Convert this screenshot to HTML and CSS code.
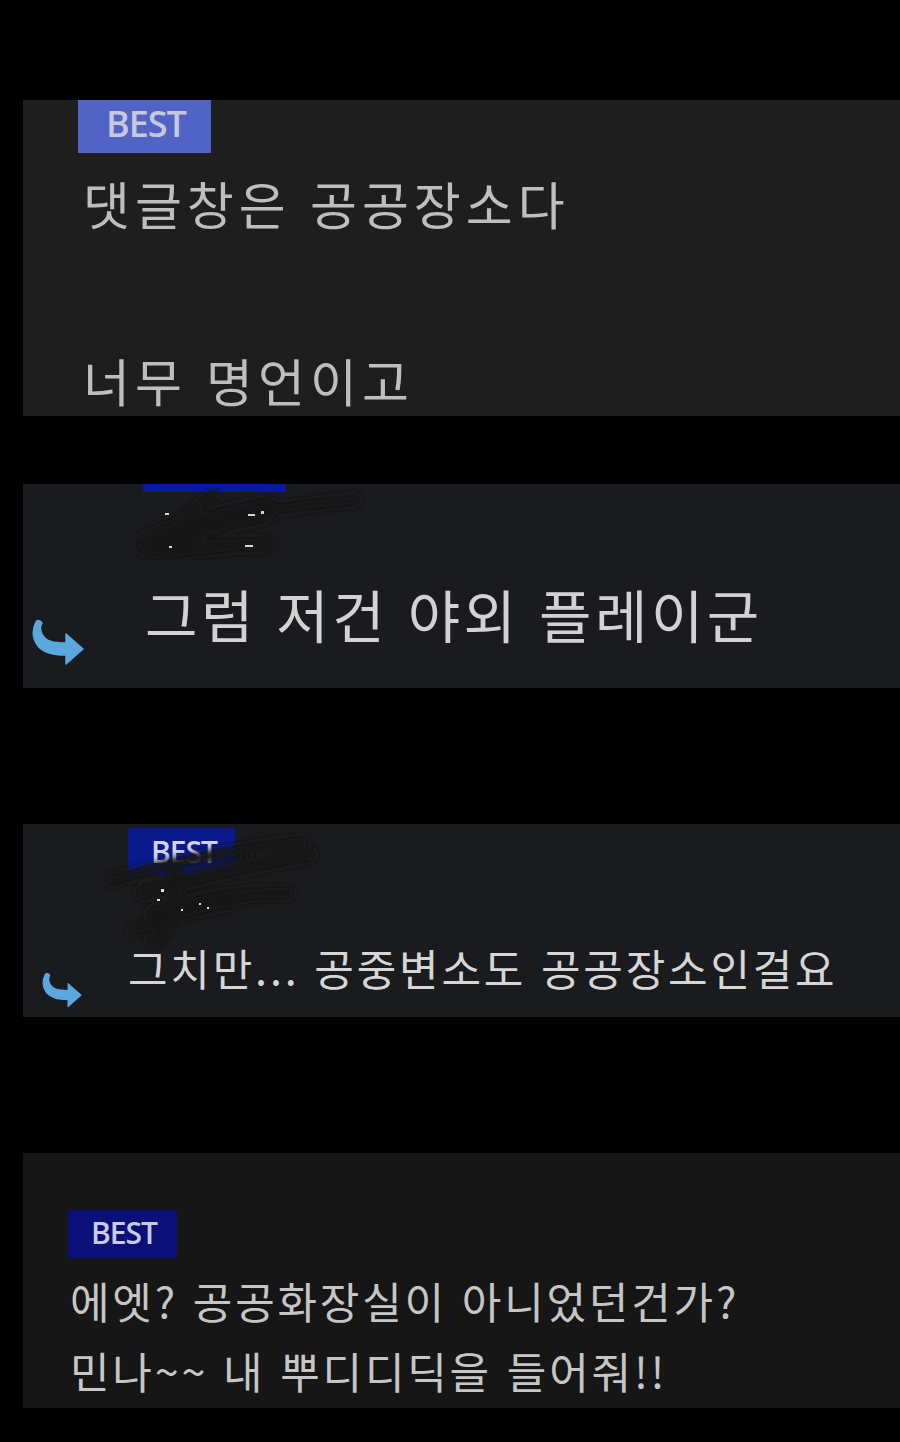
FILE: index.html
```html
<!DOCTYPE html>
<html lang="ko">
<head>
  <meta charset="UTF-8" />
  <meta name="viewport" content="width=device-width, initial-scale=1.0" />
  <title>베스트 댓글</title>
  <link rel="stylesheet" href="styles.css">
</head>
<body>
  <div class="card card-one">
    <span class="best best-one">BEST</span>
    <p class="text-one first">댓글창은 공공장소다</p>
    <p class="text-one second">너무 명언이고</p>
  </div>

  <div class="card card-two">
    <div class="best-sliver"></div>
    <div class="author author-two">
      <svg class="scribble" width="240" height="80" viewBox="0 0 240 80">
        <defs>
          <filter id="blur2"><feGaussianBlur stdDeviation="3" /></filter>
        </defs>
        <g filter="url(#blur2)" stroke="#141416" stroke-linecap="round" fill="none">
          <path d="M14 56 C50 40 90 30 130 22" stroke-width="26" />
          <path d="M20 66 C60 60 100 56 130 56" stroke-width="16" />
          <path d="M90 30 C140 20 180 16 220 12" stroke-width="12" />
          <path d="M50 30 C60 20 70 12 78 6" stroke-width="10" />
        </g>
        <g fill="#d8d8d8">
          <rect x="30" y="25" width="4" height="2" />
          <rect x="113" y="26" width="7" height="2" />
          <rect x="126" y="23" width="3" height="3" />
          <rect x="110" y="57" width="8" height="2" />
          <rect x="34" y="58" width="3" height="2" />
        </g>
      </svg>
    </div>
    <div class="reply-row">
      <svg class="reply-arrow arrow-big" viewBox="0 0 52 46">
        <path d="M4 2 C0 10 0 18 6 26 C10 31 18 35 34 35 L34 44 L51 29 L34 14 L34 23 C22 23 14 22 10 14 C8 10 8 6 10 3 C8 0 5 0 4 2 Z" />
      </svg>
      <p class="text-two">그럼 저건 야외 플레이군</p>
    </div>
  </div>

  <div class="card card-three">
    <span class="best best-three">BEST</span>
    <div class="author author-three">
      <svg class="scribble" width="230" height="125" viewBox="0 0 230 125">
        <defs>
          <filter id="blur3"><feGaussianBlur stdDeviation="3" /></filter>
        </defs>
        <g filter="url(#blur3)" stroke="#141417" stroke-linecap="round" fill="none">
          <path d="M8 52 C60 36 120 22 200 12" stroke-width="12" />
          <path d="M40 64 C90 48 150 34 205 26" stroke-width="16" />
          <path d="M50 84 C100 70 150 62 185 64" stroke-width="14" />
          <path d="M70 40 C80 64 70 92 50 112" stroke-width="14" />
          <path d="M30 102 C60 90 100 78 130 74" stroke-width="12" />
        </g>
        <g fill="#e0e0e0">
          <rect x="58" y="60" width="3" height="3" />
          <rect x="54" y="70" width="3" height="2" />
          <rect x="78" y="80" width="2" height="2" />
          <rect x="96" y="74" width="2" height="2" />
          <rect x="104" y="78" width="2" height="2" />
        </g>
      </svg>
    </div>
    <div class="reply-row">
      <svg class="reply-arrow arrow-small" viewBox="0 0 52 46">
        <path d="M4 2 C0 10 0 18 6 26 C10 31 18 35 34 35 L34 44 L51 29 L34 14 L34 23 C22 23 14 22 10 14 C8 10 8 6 10 3 C8 0 5 0 4 2 Z" />
      </svg>
      <p class="text-three">그치만... 공중변소도 공공장소인걸요</p>
    </div>
  </div>

  <div class="card card-four">
    <span class="best best-four">BEST</span>
    <p class="text-four">에엣? 공공화장실이 아니었던건가?</p>
    <p class="text-four">민나~~ 내 뿌디디딕을 들어줘!!</p>
  </div>
</body>
</html>
```

FILE: styles.css
```css
body {
  margin: 0;
  padding: 100px 0 34px;
  background: #000;
  font-family: "Noto Sans CJK KR", "Noto Sans", sans-serif;
}
p {
  margin: 0;
}
.card {
  display: flow-root;
  margin-left: 23px;
  width: 877px;
}
.card-one {
  height: 316px;
  background: #1e1e1e;
  margin-bottom: 68px;
}
.card-two {
  height: 204px;
  background: #1a1b1f;
  margin-bottom: 136px;
}
.card-three {
  height: 193px;
  background: #1a1b1e;
  margin-bottom: 136px;
}
.card-four {
  height: 255px;
  background: #161616;
}
.best {
  display: block;
  box-sizing: border-box;
  font-family: "Open Sans", "Noto Sans", sans-serif;
  font-weight: 600;
  letter-spacing: -1px;
}
.best-one {
  margin-left: 55px;
  width: 133px;
  height: 53px;
  padding-left: 28px;
  font-size: 36px;
  line-height: 47px;
  background: #5263c6;
  color: #c6c9da;
}
.best-three {
  margin: 4px 0 0 105px;
  width: 107px;
  height: 47px;
  padding-left: 23px;
  font-size: 30px;
  line-height: 48px;
  background: #0b1a8c;
  color: #d2d6e8;
  border-radius: 2px;
}
.best-four {
  margin: 57px 0 0 45px;
  width: 109px;
  height: 48px;
  padding-left: 23px;
  font-size: 30px;
  line-height: 46px;
  background: #0a1078;
  color: #c8cce0;
  border-radius: 2px;
}
.text-one {
  margin-left: 60px;
  font-size: 51px;
  line-height: 70px;
  letter-spacing: 5px;
  color: #bebebe;
}
.text-one.first {
  margin-top: 15px;
}
.text-one.second {
  margin-top: 107px;
}
.best-sliver {
  margin-left: 120px;
  width: 143px;
  height: 8px;
  background: #0a1aa0;
}
.author {
  position: relative;
}
.author-two {
  height: 86px;
}
.author-three {
  height: 64px;
}
.scribble {
  position: absolute;
}
.author-two .scribble {
  left: 112px;
  top: -4px;
}
.author-three .scribble {
  left: 80px;
  top: -46px;
}
.reply-row {
  display: flex;
  align-items: flex-start;
}
.reply-arrow {
  fill: #5aa8de;
  stroke: #5aa8de;
  stroke-width: 1.5;
  stroke-linejoin: round;
  flex-shrink: 0;
}
.arrow-big {
  width: 52px;
  height: 46px;
  margin: 42px 0 0 9px;
}
.arrow-small {
  width: 40px;
  height: 35px;
  margin: 34px 0 0 19px;
}
.text-two {
  margin-left: 61px;
  font-size: 57px;
  line-height: 70px;
  letter-spacing: 3.5px;
  color: #d2d2d2;
}
.text-three {
  margin-left: 46px;
  font-size: 43px;
  line-height: 56px;
  letter-spacing: 2.8px;
  color: #d6d6d6;
}
.text-four {
  margin-left: 47px;
  font-size: 43px;
  line-height: 70px;
  letter-spacing: 2.8px;
  color: #c6c6c6;
}
.best-four + .text-four {
  margin-top: 7px;
}
```
